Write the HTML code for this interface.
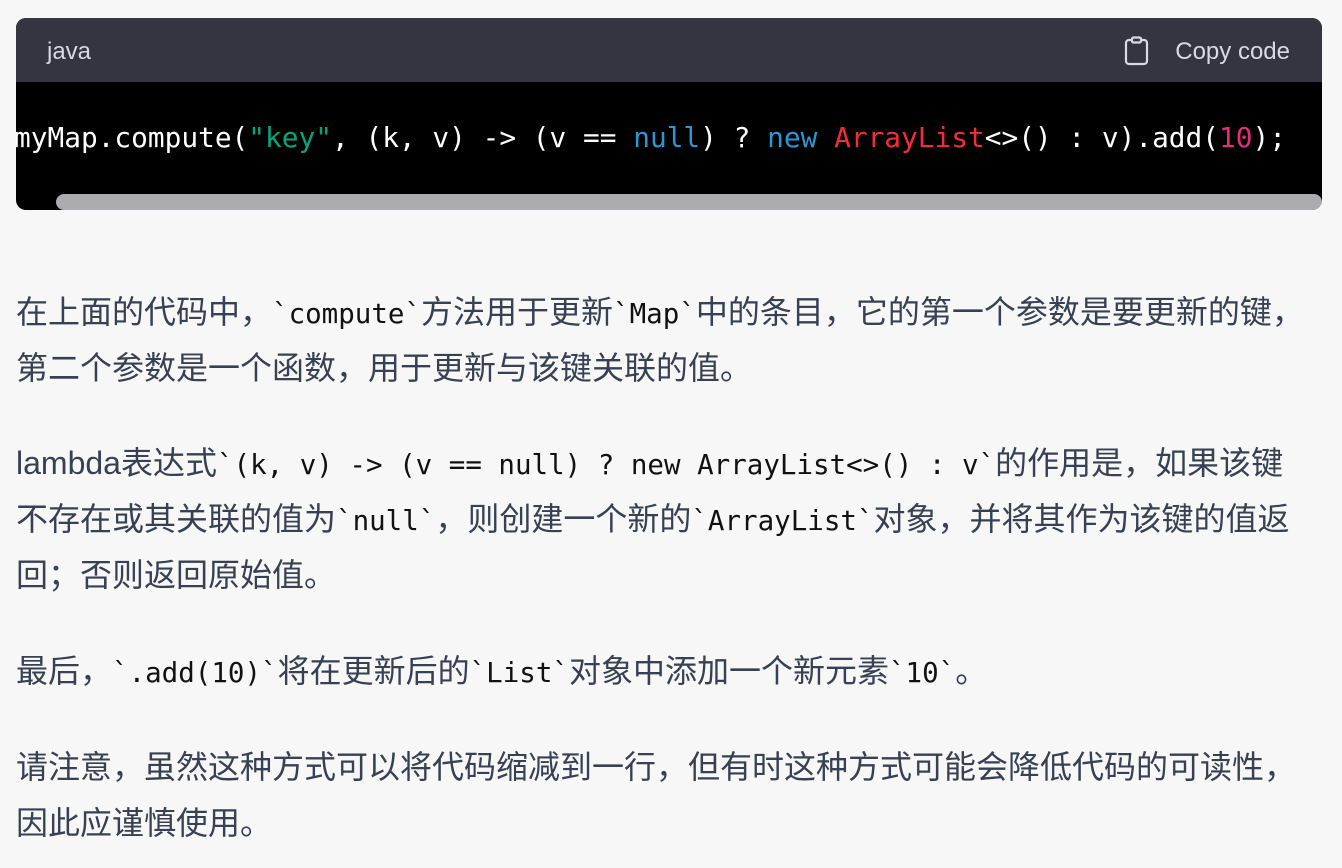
<!DOCTYPE html>
<html><head><meta charset="utf-8"><style>
body{margin:0;width:1342px;height:868px;background:#f7f7f8;overflow:hidden;position:relative;font-family:"Liberation Sans","Noto Sans CJK SC",sans-serif;}
.box{position:absolute;left:16px;top:18px;width:1306px;height:192px;border-radius:10px;overflow:hidden;background:#000;}
.hdr{height:64px;background:#343541;color:#d9d9e3;font-size:24px;position:relative;}
.hdr .l{position:absolute;left:31px;top:20px;}
.hdr .r{position:absolute;right:32px;top:20px;}
.hdr svg{position:absolute;left:1108px;top:18px;}
.code{position:absolute;left:-2px;top:100px;font-family:"DejaVu Sans Mono",monospace;font-size:27.8px;color:#fff;white-space:pre;line-height:40px;}
.sb{position:absolute;left:40px;top:176px;width:1266px;height:16px;background:#acacb0;border-radius:8px;}
.ln{position:absolute;left:16px;height:56px;line-height:56px;font-size:32px;color:#374151;white-space:nowrap;}
.ln code{font-family:"DejaVu Sans Mono",monospace;font-size:27.5px;color:#111;}
</style></head><body>
<div class="box">
<div class="hdr"><span class="l">java</span>
<svg width="26" height="30" viewBox="0 0 26 30" fill="none" stroke="#d9d9e3" stroke-width="2.2"><rect x="2" y="4" width="21" height="24" rx="3"/><rect x="8" y="1.5" width="9" height="5" rx="1.5" fill="#343541"/></svg>
<span class="r">Copy code</span></div>
<div class="code">myMap.compute(<span style="color:#00a67d">"key"</span>, (k, v) -&gt; (v == <span style="color:#2e95d3">null</span>) ? <span style="color:#2e95d3">new</span> <span style="color:#f22c3d">ArrayList</span>&lt;&gt;() : v).add(<span style="color:#df3079">10</span>);</div>
<div class="sb"></div>
</div>
<div class="ln" style="top:284px">在上面的代码中，<code>`compute`</code>方法用于更新<code>`Map`</code>中的条目，它的第一个参数是要更新的键，</div>
<div class="ln" style="top:340px">第二个参数是一个函数，用于更新与该键关联的值。</div>
<div class="ln" style="top:435px">lambda表达式<code>`(k, v) -&gt; (v == null) ? new ArrayList&lt;&gt;() : v`</code>的作用是，如果该键</div>
<div class="ln" style="top:491px">不存在或其关联的值为<code>`null`</code>，则创建一个新的<code>`ArrayList`</code>对象，并将其作为该键的值返</div>
<div class="ln" style="top:547px">回；否则返回原始值。</div>
<div class="ln" style="top:643px">最后，<code>`.add(10)`</code>将在更新后的<code>`List`</code>对象中添加一个新元素<code>`10`</code>。</div>
<div class="ln" style="top:739px">请注意，虽然这种方式可以将代码缩减到一行，但有时这种方式可能会降低代码的可读性，</div>
<div class="ln" style="top:795px">因此应谨慎使用。</div>
</body></html>
